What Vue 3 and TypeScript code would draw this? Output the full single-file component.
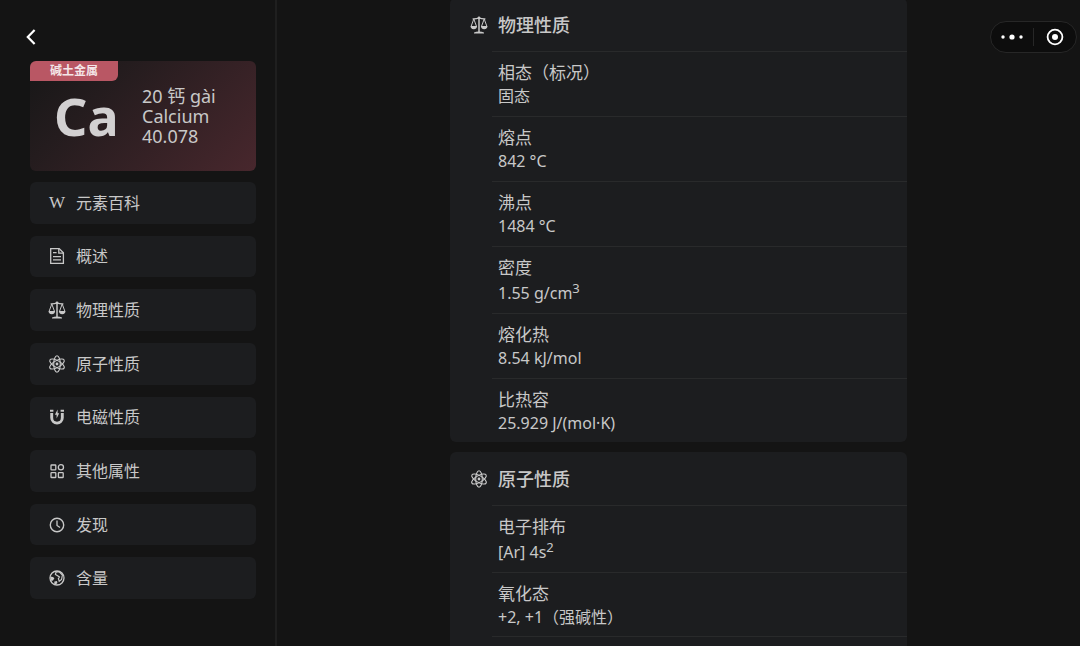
<script setup lang="ts">
type IconName = 'wiki' | 'doc' | 'scale' | 'atom' | 'magnet' | 'grid' | 'clock' | 'globe'

interface MenuItem {
  icon: IconName
  label: string
}

interface Property {
  name: string
  value: string
  sup?: string
}

interface Section {
  icon: IconName
  title: string
  rows: Property[]
}

const menu: MenuItem[] = [
  { icon: 'wiki', label: '元素百科' },
  { icon: 'doc', label: '概述' },
  { icon: 'scale', label: '物理性质' },
  { icon: 'atom', label: '原子性质' },
  { icon: 'magnet', label: '电磁性质' },
  { icon: 'grid', label: '其他属性' },
  { icon: 'clock', label: '发现' },
  { icon: 'globe', label: '含量' },
]

const sections: Section[] = [
  {
    icon: 'scale',
    title: '物理性质',
    rows: [
      { name: '相态（标况）', value: '固态' },
      { name: '熔点', value: '842 °C' },
      { name: '沸点', value: '1484 °C' },
      { name: '密度', value: '1.55 g/cm', sup: '3' },
      { name: '熔化热', value: '8.54 kJ/mol' },
      { name: '比热容', value: '25.929 J/(mol·K)' },
    ],
  },
  {
    icon: 'atom',
    title: '原子性质',
    rows: [
      { name: '电子排布', value: '[Ar] 4s', sup: '2' },
      { name: '氧化态', value: '+2, +1（强碱性）' },
    ],
  },
]
</script>

<template>
  <svg class="sprite" aria-hidden="true">
    <symbol id="icon-doc" viewBox="0 0 18 18">
      <g fill="none" stroke="currentColor" stroke-width="1.3">
        <path d="M2.7 1.6H11.2L15.4 5.8V16.4H2.7Z" />
        <path d="M10.8 1.8V6.2H15.2M5 5.6H8.6M5 9.6H13M5 12.8H13" />
      </g>
    </symbol>
    <symbol id="icon-scale" viewBox="0 0 18 18">
      <path d="M.5 10.1H7.1A3.3 3.1 0 0 1 .5 10.1ZM10.9 10.1H17.5A3.3 3.1 0 0 1 10.9 10.1ZM4 16.4Q6 15.4 9 15.4T14 16.4V17.6H4Z" fill="currentColor" />
      <g fill="none" stroke="currentColor">
        <path d="M9 1V16" stroke-width="1.5" />
        <path d="M2.6 2.8Q6 3 9 2Q12 3 15.4 2.8" stroke-width="1.2" />
        <path d="M1.2 10.1L3.8 3L6.4 10.1M11.6 10.1L14.2 3L16.8 10.1" stroke-width="1" />
      </g>
      <circle cx="9" cy="1.8" r="1.4" fill="currentColor" />
    </symbol>
    <symbol id="icon-atom" viewBox="0 0 18 18">
      <g fill="none" stroke="currentColor" stroke-width="1.1">
        <ellipse cx="9" cy="9" rx="3.3" ry="8.2" />
        <ellipse cx="9" cy="9" rx="3.3" ry="8.2" transform="rotate(60 9 9)" />
        <ellipse cx="9" cy="9" rx="3.3" ry="8.2" transform="rotate(120 9 9)" />
      </g>
      <circle cx="9" cy="9" r="1.4" fill="currentColor" />
    </symbol>
    <symbol id="icon-magnet" viewBox="0 0 18 18">
      <path d="M2 1.8H5.4V3.8H2ZM12.6 1.8H16V3.8H12.6Z" fill="currentColor" />
      <path d="M3.7 5V9.8A5.3 5.3 0 0 0 14.3 9.8V5" fill="none" stroke="currentColor" stroke-width="2.9" />
      <path d="M9.6 1.6L6.9 6.7H8.6V10.4L11.2 5.3H9.6Z" fill="currentColor" />
    </symbol>
    <symbol id="icon-grid" viewBox="0 0 18 18">
      <g fill="none" stroke="currentColor" stroke-width="1.3">
        <rect x="3" y="3" width="4.8" height="4.8" rx=".6" />
        <circle cx="12.9" cy="5.3" r="2.6" />
        <rect x="3" y="10.7" width="4.8" height="4.8" rx=".6" />
        <rect x="10.4" y="10.7" width="4.8" height="4.8" rx=".6" />
      </g>
    </symbol>
    <symbol id="icon-clock" viewBox="0 0 18 18">
      <circle cx="9" cy="9" r="6.7" fill="none" stroke="currentColor" stroke-width="1.4" />
      <path d="M9 4.6V9.4L12 11.6" fill="none" stroke="currentColor" stroke-width="1.3" />
    </symbol>
    <symbol id="icon-globe" viewBox="0 0 18 18">
      <circle cx="9" cy="9" r="7" fill="none" stroke="currentColor" stroke-width="1.3" />
      <path d="M8 3.2L11 2.6L14.4 6L13.6 10.4L11.2 12.2L10.4 9.6L11.4 8L9.2 6.6L7.4 5.4Z" fill="none" stroke="currentColor" stroke-width="1.2" />
      <path d="M2.2 7.4L5 8L6.4 9.2L5 11.4L3.4 12ZM6.4 12.4L9 12L9.4 14L7.6 15.8L6.2 14.8Z" fill="currentColor" />
    </symbol>
  </svg>

  <div class="page">
    <aside class="sidebar">
      <button class="back" type="button" aria-label="返回">
        <svg viewBox="0 0 12 18" width="12" height="18">
          <path d="M9.6 2L2.8 9L9.6 16" fill="none" stroke="currentColor" stroke-width="2.2" />
        </svg>
      </button>

      <section class="element">
        <span class="category">碱土金属</span>
        <div class="element-body">
          <strong class="symbol">Ca</strong>
          <div class="facts">
            <span>20 钙 gài</span>
            <span>Calcium</span>
            <span>40.078</span>
          </div>
        </div>
      </section>

      <nav class="menu">
        <button v-for="item in menu" :key="item.label" class="menu-item" type="button">
          <span v-if="item.icon === 'wiki'" class="icon wiki" aria-hidden="true">W</span>
          <svg v-else class="icon" aria-hidden="true"><use :href="`#icon-${item.icon}`" /></svg>
          <span>{{ item.label }}</span>
        </button>
      </nav>
    </aside>

    <main class="content">
      <section v-for="section in sections" :key="section.title" class="card">
        <h2 class="card-title">
          <svg class="icon" aria-hidden="true"><use :href="`#icon-${section.icon}`" /></svg>
          <span>{{ section.title }}</span>
        </h2>
        <dl class="rows">
          <div v-for="row in section.rows" :key="row.name" class="row">
            <dt>{{ row.name }}</dt>
            <dd :class="{ raised: row.sup }">{{ row.value }}<sup v-if="row.sup">{{ row.sup }}</sup></dd>
          </div>
        </dl>
      </section>
    </main>

    <div class="capsule">
      <button type="button" aria-label="更多">
        <svg viewBox="0 0 24 16" width="24" height="16" fill="currentColor">
          <circle cx="3" cy="8" r="1.7" />
          <circle cx="12" cy="8" r="2.6" />
          <circle cx="21" cy="8" r="1.7" />
        </svg>
      </button>
      <button type="button" aria-label="关闭">
        <svg viewBox="0 0 18 18" width="18" height="18">
          <circle cx="9" cy="9" r="7.4" fill="none" stroke="currentColor" stroke-width="1.8" />
          <circle cx="9" cy="9" r="3" fill="currentColor" />
        </svg>
      </button>
    </div>
  </div>
</template>

<style>
body {
  margin: 0;
  background: #141414;
}
</style>

<style scoped>
.page {
  display: flex;
  height: 100vh;
  overflow: hidden;
  background: #141414;
  color: #c8c8c8;
  font-family: "Noto Sans", "Noto Sans CJK SC", sans-serif;
}

.sprite {
  position: absolute;
  width: 0;
  height: 0;
}

button {
  margin: 0;
  padding: 0;
  border: 0;
  background: none;
  color: inherit;
  font: inherit;
}

.icon {
  flex: none;
  width: 18px;
  height: 18px;
}

.sidebar {
  box-sizing: border-box;
  flex: none;
  width: 277px;
  padding: 28px 19px 0 30px;
  border-right: 2px solid #1f1f1f;
}

.back {
  display: block;
  height: 18px;
  margin: 0 0 15px -5px;
  color: #fff;
}

.back svg {
  display: block;
}

.element {
  height: 110px;
  border-radius: 6px;
  background: linear-gradient(135deg, #171717 0%, #241c1e 30%, #48272d 100%);
  overflow: hidden;
}

.category {
  display: block;
  width: 88px;
  border-radius: 0 0 6px 0;
  background: #b95764;
  color: #f4e6e8;
  font-size: 12px;
  font-weight: 700;
  line-height: 20px;
  text-align: center;
}

.element-body {
  display: flex;
  align-items: center;
  height: 70px;
}

.symbol {
  box-sizing: border-box;
  width: 112px;
  padding-left: 24px;
  color: #d2d0d1;
  font-size: 52px;
  line-height: 68px;
}

.facts {
  display: flex;
  flex-direction: column;
  font-size: 18px;
  line-height: 20px;
}

.menu {
  display: grid;
  grid-auto-rows: 1fr;
  gap: 12px;
  min-height: 417px;
  margin-top: 11px;
}

.menu-item {
  display: flex;
  align-items: center;
  gap: 10px;
  padding-left: 18px;
  border-radius: 6px;
  background: #1c1d1f;
  font-size: 16px;
  line-height: 24px;
}

.wiki {
  font-family: "Liberation Serif", serif;
  font-size: 17px;
  line-height: 18px;
  text-align: center;
}

.content {
  flex: 1;
  margin-top: -2px;
  overflow: hidden;
}

.card {
  max-width: 457px;
  margin: 0 auto 10px;
  border-radius: 6px;
  background: #1c1d1f;
  overflow: hidden;
}

.card-title {
  display: flex;
  align-items: center;
  gap: 10px;
  height: 53px;
  margin: 0;
  padding-left: 20px;
  font-size: 18px;
  font-weight: 500;
  line-height: 26px;
}

.rows {
  margin: 0 0 0 42px;
}

.row {
  padding: 8px 6px;
  border-top: 1px solid #292a2b;
}

.row:last-child {
  padding-bottom: 7px;
}

.card:last-child .row:last-child {
  border-bottom: 1px solid #292a2b;
  margin-bottom: 24px;
}

dt {
  font-size: 17px;
  line-height: 25px;
}

dd {
  margin: 0;
  font-size: 16px;
  line-height: 23px;
}

dd.raised {
  padding-top: 2px;
}

sup {
  font-size: 13px;
  line-height: 0;
}

.capsule {
  position: absolute;
  top: 21px;
  right: 3px;
  display: flex;
  align-items: center;
  box-sizing: border-box;
  width: 87px;
  height: 32px;
  border: 1px solid #272727;
  border-radius: 16px;
  background: #0d0d0d;
  color: #fff;
}

.capsule button {
  display: flex;
  flex: 1;
  align-items: center;
  justify-content: center;
  height: 18px;
}

.capsule button + button {
  border-left: 1px solid #272727;
}
</style>
